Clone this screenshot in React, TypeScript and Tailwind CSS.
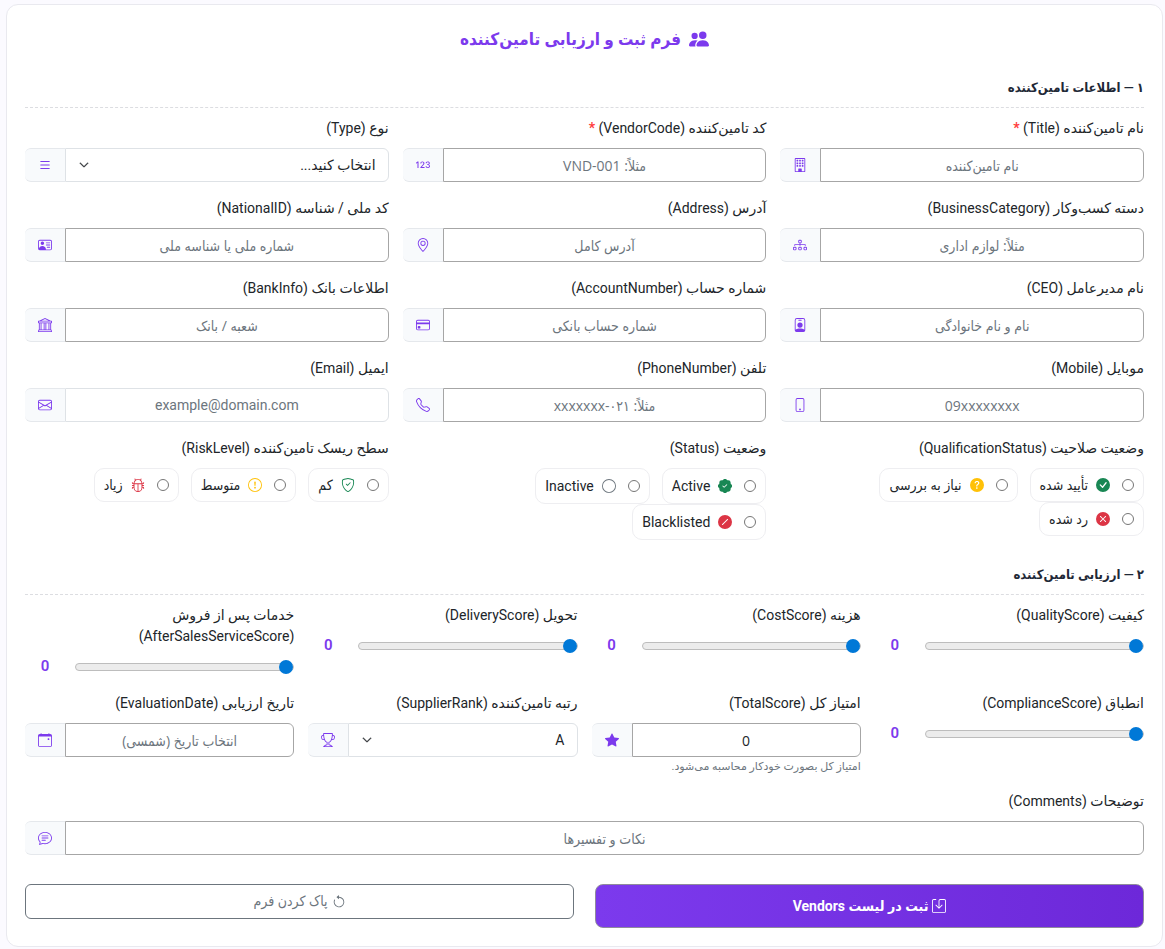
import { useState, type ReactNode } from "react";
import type { IconType } from "react-icons";
import {
  Bs123,
  BsArrowCounterclockwise,
  BsBank,
  BsBug,
  BsBuilding,
  BsCalendarEvent,
  BsChatText,
  BsCheckCircleFill,
  BsChevronDown,
  BsCircle,
  BsCreditCard,
  BsDiagram3,
  BsEnvelope,
  BsExclamationCircle,
  BsGeoAlt,
  BsList,
  BsPatchCheckFill,
  BsPeopleFill,
  BsPersonBadge,
  BsPersonVcard,
  BsPhone,
  BsQuestionCircleFill,
  BsSave,
  BsShieldCheck,
  BsSlashCircleFill,
  BsStarFill,
  BsTelephone,
  BsTrophy,
  BsXCircleFill,
} from "react-icons/bs";
import clsx from "clsx";

function SectionTitle({ children }: { children: ReactNode }) {
  return (
    <h2 className="mb-2.5 border-b border-dashed border-[#dcdde1] pb-[9px] font-[Roboto,DejaVu_Sans_Condensed,sans-serif] text-[13px] font-bold leading-[21px] text-[#1f2937]">
      {children}
    </h2>
  );
}

function FieldLabel({ id, required, children }: { id?: string; required?: boolean; children: ReactNode }) {
  return (
    <label htmlFor={id} className="mb-[9px] block text-[14px] leading-[21px]">
      {children}
      {required && <span className="font-bold text-[#ff3b3b]"> *</span>}
    </label>
  );
}

function IconBox({ icon: Icon }: { icon: IconType }) {
  return (
    <span className="flex w-10 shrink-0 items-center justify-center rounded-e-md border-y border-[#e5e8ec] bg-[#f8fafc] text-[14px] text-[#7c3aed]">
      <Icon />
    </span>
  );
}

type FieldProps = {
  id: string;
  label: string;
  icon: IconType;
  placeholder?: string;
  type?: string;
  value?: string;
  required?: boolean;
  hint?: string;
};

function TextField({ id, label, icon, placeholder, type = "text", value, required, hint }: FieldProps) {
  return (
    <div>
      <FieldLabel id={id} required={required}>
        {label}
      </FieldLabel>
      <div className="flex h-[34px]">
        <input
          id={id}
          type={type}
          placeholder={placeholder}
          defaultValue={value}
          readOnly={value !== undefined}
          className={clsx(
            "min-w-0 flex-1 rounded-s-md border bg-white px-3 text-center text-[14px] outline-none placeholder:text-[#6c757d]",
            type === "email"
              ? "border-[#dee2e6]"
              : "border-[#a6a6a6] font-[Open_Sans,DejaVu_Sans_Condensed,sans-serif]",
          )}
        />
        <IconBox icon={icon} />
      </div>
      {hint && <p className="mt-0.5 text-[11px] leading-4 text-[#6c757d]">{hint}</p>}
    </div>
  );
}

function SelectField({ id, label, icon, options }: { id: string; label: string; icon: IconType; options: string[] }) {
  return (
    <div>
      <FieldLabel id={id}>{label}</FieldLabel>
      <div className="flex h-[34px]">
        <div className="relative min-w-0 flex-1">
          <select
            id={id}
            className="h-full w-full appearance-none rounded-s-md border border-[#dee2e6] bg-white px-3 text-[14px] outline-none"
          >
            {options.map((option) => (
              <option key={option}>{option}</option>
            ))}
          </select>
          <BsChevronDown className="pointer-events-none absolute inset-y-0 end-3.5 my-auto text-[10px]" strokeWidth={1} />
        </div>
        <IconBox icon={icon} />
      </div>
    </div>
  );
}

type Choice = { text: string; icon: IconType; color: string };

function RadioGroup({ name, label, choices, tall }: { name: string; label: string; choices: Choice[]; tall?: boolean }) {
  return (
    <div role="radiogroup" aria-label={label}>
      <FieldLabel>{label}</FieldLabel>
      <div className="flex flex-wrap gap-x-3">
        {choices.map(({ text, icon: Icon, color }) => (
          <label
            key={text}
            className={clsx(
              "flex items-center rounded-[10px] border border-[#eeeef1] px-[9px] font-[Roboto,DejaVu_Sans_Condensed,sans-serif] text-[14px]",
              tall ? "h-9" : "h-[34px]",
            )}
          >
            <input type="radio" name={name} value={text} className="m-0 size-3" />
            <Icon className={clsx("ms-3 me-2 text-[14px]", color)} />
            {text}
          </label>
        ))}
      </div>
    </div>
  );
}

function ScoreField({ id, label }: { id: string; label: string }) {
  const [score, setScore] = useState(0);

  return (
    <div>
      <FieldLabel id={id}>{label}</FieldLabel>
      <div className="flex h-[21px] items-center gap-2.5">
        <input
          id={id}
          type="range"
          min={0}
          max={100}
          value={score}
          onChange={(e) => setScore(Number(e.target.value))}
          className="h-4 min-w-0 flex-1 appearance-none bg-transparent [&::-webkit-slider-runnable-track]:h-2 [&::-webkit-slider-runnable-track]:rounded-full [&::-webkit-slider-runnable-track]:border [&::-webkit-slider-runnable-track]:border-[#bdbdbd] [&::-webkit-slider-runnable-track]:bg-[#ececec] [&::-webkit-slider-thumb]:-mt-1 [&::-webkit-slider-thumb]:size-3.5 [&::-webkit-slider-thumb]:appearance-none [&::-webkit-slider-thumb]:rounded-full [&::-webkit-slider-thumb]:bg-[#0078d7]"
        />
        <output htmlFor={id} className="w-10 text-center text-[15px] font-semibold text-[#7c3aed]">
          {score}
        </output>
      </div>
    </div>
  );
}

export default function App() {
  return (
    <div
      dir="rtl"
      className="bg-[#fbfaff] pb-0.5 pl-1.5 pr-0.5 pt-1 font-[Roboto,DejaVu_Sans,sans-serif] text-[#212529]"
    >
      <form className="rounded-xl border border-[#e9e9ef] bg-white p-[18px]" onSubmit={(e) => e.preventDefault()}>
        <h1 className="mb-[22px] flex items-center justify-center gap-2 font-[Roboto,DejaVu_Sans_Condensed,sans-serif] text-[17px] font-bold leading-8 text-[#7c3aed]">
          <BsPeopleFill className="text-[20px]" />
          فرم ثبت و ارزیابی تامین‌کننده
        </h1>

        <SectionTitle>۱ — اطلاعات تامین‌کننده</SectionTitle>
        <div className="grid grid-cols-3 gap-x-3.5 gap-y-4">
          <TextField id="title" label="نام تامین‌کننده (Title)" icon={BsBuilding} placeholder="نام تامین‌کننده" required />
          <TextField id="code" label="کد تامین‌کننده (VendorCode)" icon={Bs123} placeholder="مثلاً: VND-001" required />
          <SelectField id="type" label="نوع (Type)" icon={BsList} options={["انتخاب کنید..."]} />
          <TextField id="category" label="دسته کسب‌وکار (BusinessCategory)" icon={BsDiagram3} placeholder="مثلاً: لوازم اداری" />
          <TextField id="address" label="آدرس (Address)" icon={BsGeoAlt} placeholder="آدرس کامل" />
          <TextField id="nationalId" label="کد ملی / شناسه (NationalID)" icon={BsPersonVcard} placeholder="شماره ملی یا شناسه ملی" />
          <TextField id="ceo" label="نام مدیرعامل (CEO)" icon={BsPersonBadge} placeholder="نام و نام خانوادگی" />
          <TextField id="account" label="شماره حساب (AccountNumber)" icon={BsCreditCard} placeholder="شماره حساب بانکی" />
          <TextField id="bank" label="اطلاعات بانک (BankInfo)" icon={BsBank} placeholder="شعبه / بانک" />
          <TextField id="mobile" label="موبایل (Mobile)" icon={BsPhone} placeholder="09xxxxxxxx" />
          <TextField id="phone" label="تلفن (PhoneNumber)" icon={BsTelephone} placeholder="مثلاً: ۰۲۱-xxxxxxx" />
          <TextField id="email" label="ایمیل (Email)" icon={BsEnvelope} type="email" placeholder="example@domain.com" />
          <RadioGroup
            name="qualification"
            label="وضعیت صلاحیت (QualificationStatus)"
            choices={[
              { text: "تأیید شده", icon: BsCheckCircleFill, color: "text-[#198754]" },
              { text: "نیاز به بررسی", icon: BsQuestionCircleFill, color: "text-[#ffc107]" },
              { text: "رد شده", icon: BsXCircleFill, color: "text-[#dc3545]" },
            ]}
          />
          <RadioGroup
            name="status"
            label="وضعیت (Status)"
            tall
            choices={[
              { text: "Active", icon: BsPatchCheckFill, color: "text-[#198754]" },
              { text: "Inactive", icon: BsCircle, color: "text-[#6c757d]" },
              { text: "Blacklisted", icon: BsSlashCircleFill, color: "text-[#dc3545]" },
            ]}
          />
          <RadioGroup
            name="risk"
            label="سطح ریسک تامین‌کننده (RiskLevel)"
            choices={[
              { text: "کم", icon: BsShieldCheck, color: "text-[#198754]" },
              { text: "متوسط", icon: BsExclamationCircle, color: "text-[#ffc107]" },
              { text: "زیاد", icon: BsBug, color: "text-[#dc3545]" },
            ]}
          />
        </div>

        <div className="mt-6">
          <SectionTitle>۲ — ارزیابی تامین‌کننده</SectionTitle>
          <div className="grid grid-cols-4 gap-x-3.5 gap-y-4">
            <ScoreField id="quality" label="کیفیت (QualityScore)" />
            <ScoreField id="cost" label="هزینه (CostScore)" />
            <ScoreField id="delivery" label="تحویل (DeliveryScore)" />
            <ScoreField id="afterSales" label="خدمات پس از فروش (AfterSalesServiceScore)" />
            <ScoreField id="compliance" label="انطباق (ComplianceScore)" />
            <TextField
              id="total"
              label="امتیاز کل (TotalScore)"
              icon={BsStarFill}
              value="0"
              hint="امتیاز کل بصورت خودکار محاسبه می‌شود."
            />
            <SelectField id="rank" label="رتبه تامین‌کننده (SupplierRank)" icon={BsTrophy} options={["A", "B", "C"]} />
            <TextField id="date" label="تاریخ ارزیابی (EvaluationDate)" icon={BsCalendarEvent} placeholder="انتخاب تاریخ (شمسی)" />
          </div>
        </div>

        <div className="mt-4">
          <TextField id="comments" label="توضیحات (Comments)" icon={BsChatText} placeholder="نکات و تفسیرها" />
        </div>

        <div className="mt-[29px] grid grid-cols-2 items-start gap-[21px] font-[Roboto,DejaVu_Sans_Condensed,sans-serif] text-[14px]">
          <button
            type="submit"
            className="flex h-11 items-center justify-center gap-1 rounded-lg border border-[#8f8a9c] bg-linear-to-r from-[#7c3aed] to-[#6d28d9] font-bold text-white"
          >
            <BsSave />
            ثبت در لیست Vendors
          </button>
          <button
            type="reset"
            className="flex h-[35px] items-center justify-center gap-1 rounded-md border border-[#6c757d] text-[#6c757d]"
          >
            <BsArrowCounterclockwise />
            پاک کردن فرم
          </button>
        </div>
      </form>
    </div>
  );
}
